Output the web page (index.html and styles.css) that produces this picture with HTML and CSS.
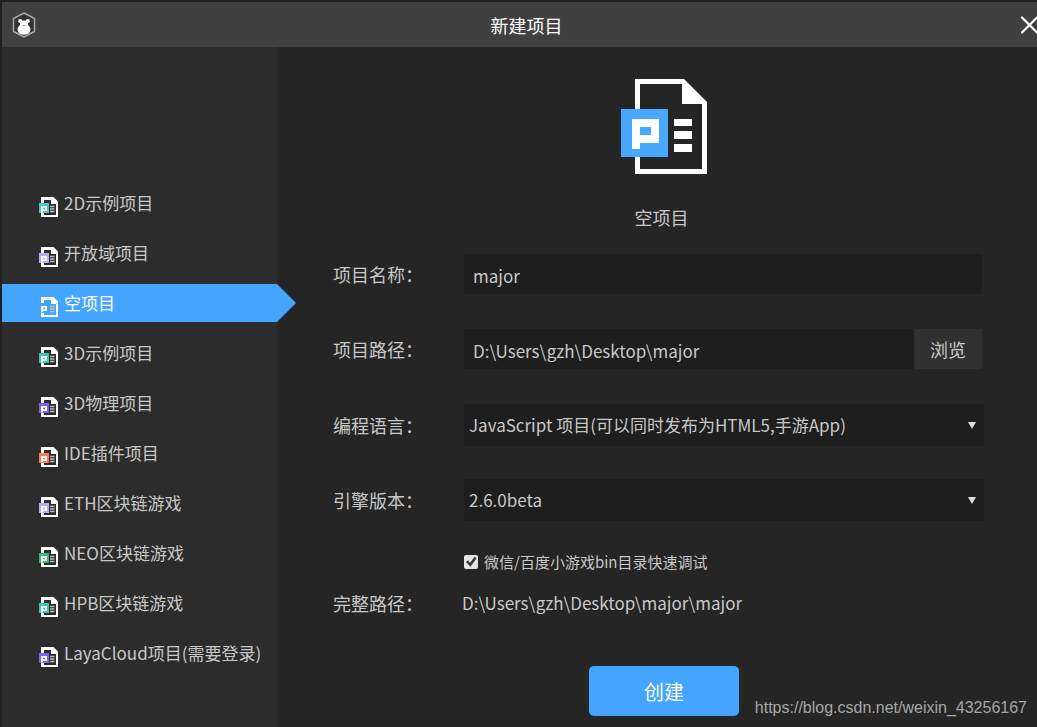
FILE: index.html
```html
<!DOCTYPE html>
<html lang="zh-CN">
<head>
<meta charset="utf-8">
<title>新建项目</title>
<link rel="stylesheet" href="styles.css">
</head>
<body>
<svg class="defs" aria-hidden="true">
  <symbol id="doc" viewBox="0 0 19 20">
    <path fill="#fff" fill-rule="evenodd" d="M2 0H14.500L19 4.500V20H2ZM5 3V18H17V7H12V3Z"/>
    <path stroke="#bbb" stroke-width="1.300" d="M11 9.500h4.500M11 12h4.500M11 14.500h4.500"/>
    <path fill="currentColor" d="M0 6h10v10H0z"/>
    <path fill="#fff" fill-rule="evenodd" d="M2 9H8V14H4V15.500H2ZM4 10.700V12.300H6V10.700Z"/>
  </symbol>
</svg>
<div class="window">
  <header class="titlebar">
    <svg class="logo" viewBox="0 0 24 26" aria-hidden="true">
      <path fill="#333" stroke="#aaa" stroke-width="1.500" d="M12 1L22.500 6.500V19.500L12 25L1.500 19.500V6.500Z"/>
      <circle cx="8.200" cy="9" r="2" fill="#fff"/><circle cx="15.800" cy="9" r="2" fill="#fff"/>
      <path fill="#fff" d="M8 9q4 -1 8 0l0 4q2.500 1.500 2.500 4.500q-.5 5.200-6.500 5.200t-6.500-5.200q0-3 2.500-4.500z"/>
      <path stroke="#aaa" d="M10.500 13.500h3"/>
    </svg>
    <h1 class="window-title">新建项目</h1>
    <button class="close" type="button" aria-label="关闭">
      <svg viewBox="0 0 16 18" width="16" height="18"><path fill="none" stroke="#fff" stroke-width="2.200" stroke-linecap="round" d="M1 1.500L16 16.500M1 16.500L16 1.500"/></svg>
    </button>
  </header>
  <div class="body">
    <nav class="sidebar">
      <a class="item cyan" href="#"><svg><use href="#doc"/></svg><span>2D示例项目</span></a>
      <a class="item lilac" href="#"><svg><use href="#doc"/></svg><span>开放域项目</span></a>
      <a class="item blue selected" href="#" aria-current="page"><svg><use href="#doc"/></svg><span>空项目</span></a>
      <a class="item teal" href="#"><svg><use href="#doc"/></svg><span>3D示例项目</span></a>
      <a class="item violet" href="#"><svg><use href="#doc"/></svg><span>3D物理项目</span></a>
      <a class="item orange" href="#"><svg><use href="#doc"/></svg><span>IDE插件项目</span></a>
      <a class="item lilac" href="#"><svg><use href="#doc"/></svg><span>ETH区块链游戏</span></a>
      <a class="item green" href="#"><svg><use href="#doc"/></svg><span>NEO区块链游戏</span></a>
      <a class="item teal" href="#"><svg><use href="#doc"/></svg><span>HPB区块链游戏</span></a>
      <a class="item violet" href="#"><svg><use href="#doc"/></svg><span>LayaCloud项目(需要登录)</span></a>
    </nav>
    <main class="main">
      <svg class="hero" viewBox="0 0 86 95" width="86" height="95" aria-hidden="true">
        <path fill="#fff" fill-rule="evenodd" d="M14 0H63L86 23V95H14ZM19 5V90H81V25H61V5Z"/>
        <path fill="#fff" d="M53 40h18v7H53zM53 52h18v8H53zM53 65h18v8H53z"/>
        <path fill="#48a8ff" d="M0 30h47v48H0z"/>
        <path fill="#fff" fill-rule="evenodd" d="M11 40H38V64H19V70H11ZM19 48V56H30V48Z"/>
      </svg>
      <h2 class="project-title">空项目</h2>
      <form class="form">
        <div class="row">
          <label for="name">项目名称：</label>
          <input class="field" id="name" type="text" value="major">
        </div>
        <div class="row">
          <label for="path">项目路径：</label>
          <div class="path"><input class="field" id="path" type="text" value="D:\Users\gzh\Desktop\major"><button class="browse" type="button">浏览</button></div>
        </div>
        <div class="row wide">
          <label for="lang">编程语言：</label>
          <div class="picker"><select class="select" id="lang"><option>JavaScript 项目(可以同时发布为HTML5,手游App)</option></select><svg viewBox="0 0 8 7" width="8" height="7"><path fill="#ddd" d="M0 0h8L4 7z"/></svg></div>
        </div>
        <div class="row wide">
          <label for="ver">引擎版本：</label>
          <div class="picker"><select class="select" id="ver"><option>2.6.0beta</option></select><svg viewBox="0 0 8 7" width="8" height="7"><path fill="#ddd" d="M0 0h8L4 7z"/></svg></div>
        </div>
        <div class="check">
          <input class="box" id="debug" type="checkbox" checked>
          <label for="debug">微信/百度小游戏bin目录快速调试</label>
        </div>
        <div class="row full">
          <span>完整路径：</span>
          <output class="fullpath">D:\Users\gzh\Desktop\major\major</output>
        </div>
      </form>
      <button class="create" type="button">创建</button>
    </main>
  </div>
  <div class="watermark">https://blog.csdn.net/weixin_43256167</div>
</div>
</body>
</html>
```
FILE: styles.css
```css
* { box-sizing: border-box; }
body {
  margin: 0;
  background: #202020;
  color: #c8c8c8;
  font: 18px/28px "Noto Sans CJK SC", sans-serif;
}
input, select, button { font: inherit; color: inherit; border: 0; margin: 0; border-radius: 0; }
.defs { position: absolute; width: 0; height: 0; }
.window {
  position: relative;
  display: flex;
  flex-direction: column;
  min-height: 100vh;
  padding: 2px 0 0 2px;
}
.titlebar {
  display: grid;
  grid-template-columns: 1fr auto 1fr;
  align-items: center;
  height: 45px;
  padding-left: 10px;
  background: #404040;
}
.logo { width: 24px; height: 26px; }
.window-title { margin: 0; padding-left: 4px; font-size: 18px; font-weight: 400; color: #fff; }
.close { display: flex; justify-self: end; padding: 0; background: none; }
.body { display: flex; flex: 1; }
.sidebar {
  display: flex;
  flex-direction: column;
  flex: none;
  gap: 12px;
  width: 275px;
  padding-top: 137px;
  background: #2c2c2c;
}
.item {
  position: relative;
  display: flex;
  align-items: flex-end;
  gap: 6px;
  height: 38px;
  padding: 0 0 5px 37px;
  color: #c8c8c8;
  font-size: 17px;
  text-decoration: none;
  white-space: nowrap;
}
.item svg { width: 19px; height: 20px; color: var(--tint); }
.selected { background: #43a5ff; color: #fff; }
.selected::after {
  content: "";
  position: absolute;
  left: 100%;
  top: 0;
  width: 19px;
  height: 100%;
  background: #43a5ff;
  clip-path: polygon(0 0, 100% 50%, 0 100%);
}
.cyan { --tint: #3fc8d8; }
.lilac { --tint: #b8a8fa; }
.blue { --tint: #43a5ff; }
.teal { --tint: #35c8b0; }
.violet { --tint: #8060f0; }
.orange { --tint: #ff7858; }
.green { --tint: #38b870; }
.main {
  display: flex;
  flex: 1;
  flex-direction: column;
  align-items: center;
  min-width: 0;
  padding: 32px 42px 11px 56px;
  background: #252525;
}
.hero { flex: none; }
.project-title { margin: 29px 0 23px; padding-right: 5px; font-size: 18px; font-weight: 400; }
.form { display: flex; flex-direction: column; width: 100%; padding-right: 11px; }
.row {
  display: grid;
  grid-template-columns: 131px 1fr;
  align-items: center;
  height: 40px;
  margin-bottom: 35px;
  padding-right: 2px;
}
.wide { height: 42px; margin-bottom: 33px; padding-right: 0; }
.field {
  width: 100%;
  min-width: 0;
  height: 40px;
  padding: 2px 9px 0;
  background: #1e1e1e;
  font-size: 17px;
}
.path { display: flex; }
.browse { flex: none; width: 68px; height: 40px; padding: 0; background: #303030; }
.picker { position: relative; display: grid; }
.picker svg { position: absolute; right: 8px; top: 18px; pointer-events: none; }
.select {
  appearance: none;
  width: 100%;
  height: 42px;
  padding: 0 24px 0 5px;
  background: #1e1e1e;
  font-size: 17px;
}
.check {
  display: flex;
  align-items: center;
  gap: 6px;
  height: 16px;
  margin-left: 131px;
  font-size: 15px;
}
.box {
  appearance: none;
  display: grid;
  width: 14px;
  height: 14px;
  border-radius: 2px;
  background: #e4e4e4;
}
.box:checked::before {
  content: "";
  background: #383838;
  clip-path: polygon(14% 50%, 28% 38%, 43% 55%, 76% 12%, 90% 24%, 46% 84%);
}
.full { margin: 13px 0 43px; }
.fullpath { margin-left: -2px; font-size: 17px; }
.create {
  width: 150px;
  height: 50px;
  padding: 2px 0 0;
  border-radius: 5px;
  background: #43a5ff;
  color: #fff;
  font-size: 20px;
}
.watermark {
  position: absolute;
  right: 10px;
  bottom: 9px;
  color: #a6a6a6;
  font: 16px/20px "Liberation Sans", sans-serif;
}
```
